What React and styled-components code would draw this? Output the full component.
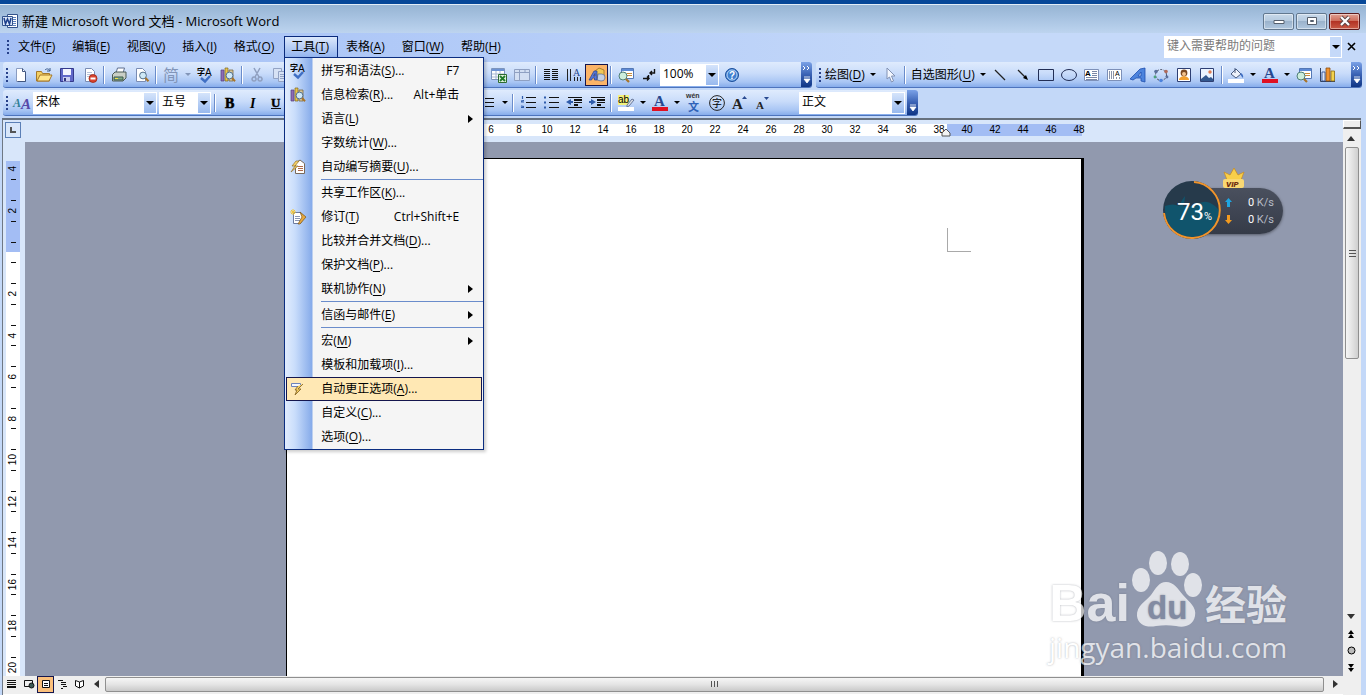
import React from 'react';
import styled, { createGlobalStyle, css } from 'styled-components';

const GlobalStyle = createGlobalStyle`
  * { box-sizing: border-box; }
  body {
    margin: 0;
    font: 12px/16px "Open Sans", "Noto Sans CJK SC", sans-serif;
    color: #000;
    overflow: hidden;
  }
  button, select, input {
    font: inherit;
    color: inherit;
    margin: 0;
    padding: 0;
    border: 0;
    background: none;
    border-radius: 0;
  }
  u { text-underline-offset: 2px; }
  svg { overflow: visible; }
`;

const barFill = 'linear-gradient(#dfebfd 0%, #c9dcfa 45%, #a9c6f4 80%, #86aceb 100%)';
const endFill = 'linear-gradient(#7ba2e7, #3a62b4 50%, #0f3585)';

/* ---------- window ---------- */

const Window = styled.div`
  display: flex;
  flex-direction: column;
  height: 100vh;
  border-top: 4px solid #064798;
  background: #c3d8f8;
  position: relative;
`;

const TitleBar = styled.header`
  display: flex;
  align-items: center;
  height: 29px;
  padding: 4px 6px 0 2px;
  border-top: 1px solid #e2edf7;
  background: linear-gradient(#96b4d3, #a9c4e2 50%, #bdd4ef);
`;

const Title = styled.h1`
  flex: 1;
  margin: 0 0 0 4px;
  font-size: 13px;
  font-weight: 400;
  line-height: 18px;
`;

const WindowButtons = styled.div`
  display: flex;
  gap: 2px;
`;

const WindowButton = styled.button`
  display: flex;
  align-items: center;
  justify-content: center;
  width: 31px;
  height: 17px;
  border: 1px solid ${p => (p.$close ? '#5c1a1c' : '#62788f')};
  border-radius: 2px;
  box-shadow: inset 0 0 0 1px rgba(255, 255, 255, .45);
  background: ${p => (p.$close
    ? 'linear-gradient(#e0a093, #cd6a58 48%, #b33325 50%, #c95a45)'
    : 'linear-gradient(#c8d9ea, #b4c9de 48%, #9bb3cc 50%, #b0c7df)')};
`;

/* ---------- menu bar ---------- */

const MenuBar = styled.nav`
  display: flex;
  align-items: center;
  gap: 1px;
  height: 29px;
  padding: 0 5px 2px 7px;
  background: linear-gradient(90deg, #a4bff5, #b5cdf8 40%, #c5d9f9 70%);
`;

const MenuEntry = styled.div`
  position: relative;
`;

const MenuButton = styled.button`
  height: 22px;
  padding: 0 8px 0 6px;
  border: 1px solid transparent;
  white-space: nowrap;
  ${p => p.$open && css`
    border-color: #0a2a7c;
    border-bottom: 0;
    background: linear-gradient(#dce8fb, #90b2ee);
  `}
`;

const HelpBox = styled.div`
  display: flex;
  margin-left: auto;
  width: 178px;
  height: 22px;
  background: #fff;
`;

const HelpInput = styled.input`
  flex: 1;
  min-width: 0;
  padding: 0 3px 2px;
  &::placeholder { color: #7b7b7b; opacity: 1; }
`;

const CaretButton = styled.button`
  display: flex;
  align-items: center;
  justify-content: center;
  width: 13px;
  border: 1px solid #fff;
  background: #c5d9f9;
`;

const CloseDoc = styled.button`
  display: flex;
  padding: 4px 5px 4px 4px;
`;

const Dropdown = styled.div`
  position: absolute;
  z-index: 5;
  top: 21px;
  left: 0;
  width: 200px;
  padding: 1px 0 0;
  border: 1px solid #0b2d80;
  background: linear-gradient(90deg, #dfebfd 1px, #c9ddfb 10px, #86abea 27px, #f5f5f5 28px);
  box-shadow: 2px 2px 3px rgba(0, 0, 0, .2);
`;

const DropItem = styled.button`
  display: flex;
  align-items: center;
  width: 196px;
  height: 24px;
  margin: 0 1px;
  padding: 0 6px 0 3px;
  border: 1px solid transparent;
  text-align: left;
  ${p => p.$active && css`
    border-color: #14164e;
    background: #ffe8b4;
  `}
`;

const DropIcon = styled.span`
  display: flex;
  width: 31px;
`;

const Shortcut = styled.span`
  margin-left: auto;
  padding-right: 16px;
`;

const SubArrow = styled.span`
  margin-left: auto;
  margin-right: 2px;
  border: 4px solid transparent;
  border-left: 5px solid #000;
  border-right: 0;
`;

const DropLine = styled.div`
  height: 2px;
  margin-left: 36px;
  border-top: 1px solid #6a8ccb;
`;

/* ---------- toolbars ---------- */

const ToolRow = styled.div`
  display: flex;
  height: ${p => p.$h}px;
  padding: 0 4px 2px 3px;
  gap: 4px;
`;

const Toolbar = styled.div`
  display: flex;
  align-items: center;
  padding-left: 3px;
  border-radius: 3px;
  border-bottom: 1px solid #4d74bd;
  background: ${barFill};
  flex: ${p => (p.$grow ? '1' : 'none')};
  width: ${p => (p.$w ? p.$w + 'px' : 'auto')};
  min-width: 0;
`;

const Grip = styled.span`
  flex: none;
  width: 2px;
  height: 14px;
  margin-right: ${p => p.$after || 1}px;
  background: repeating-linear-gradient(#27418a 0 2px, transparent 2px 4px);
`;

const ToolButton = styled.button`
  flex: none;
  display: flex;
  align-items: center;
  justify-content: center;
  width: 23px;
  height: 22px;
  ${p => p.$on && css`
    border: 1px solid #14164e;
    background: #fbb467;
  `}
`;

const TextTool = styled.button`
  flex: none;
  padding: 0 3px;
  white-space: nowrap;
`;

const Split = styled.span`
  flex: none;
  width: 2px;
  height: 18px;
  margin: 0 2px;
  border-left: 1px solid #6a8ccb;
  border-right: 1px solid #fff;
`;

const Drop = styled.button`
  flex: none;
  display: flex;
  justify-content: center;
  width: 11px;
`;

const Triangle = styled.span`
  border: ${p => p.$size || 3}px solid transparent;
  border-top-color: ${p => p.$color || '#000'};
  border-bottom: 0;
`;

const Covered = styled.span`
  flex: none;
  width: ${p => p.$w}px;
`;

const Picker = styled.label`
  flex: none;
  position: relative;
  display: block;
  width: ${p => p.$w}px;
  height: 22px;
  margin-right: ${p => p.$after || 0}px;
  select {
    appearance: none;
    width: 100%;
    height: 100%;
    padding: 0 16px 2px 3px;
    background: #fff;
  }
`;

const PickerCaret = styled.span`
  position: absolute;
  top: 1px;
  right: 1px;
  bottom: 1px;
  display: flex;
  align-items: center;
  justify-content: center;
  width: 12px;
  background: linear-gradient(#d5e4fb, #98b9ee);
  pointer-events: none;
`;

const ToolEnd = styled.button`
  align-self: stretch;
  flex: none;
  display: flex;
  flex-direction: column;
  align-items: center;
  justify-content: space-between;
  width: 11px;
  margin-left: auto;
  padding: 3px 0;
  border-radius: 0 3px 3px 0;
  background: ${endFill};
`;

/* ---------- document area ---------- */

const Body = styled.div`
  flex: 1;
  display: grid;
  grid-template-columns: 22px 1fr 18px;
  grid-template-rows: 22px 1fr 19px;
  min-height: 0;
  margin: 0 5px 0 2px;
  border-top: 2px solid #66717f;
  border-left: 1px solid #6f7884;
  background: #d8e6fa;
`;

const TabCorner = styled.button`
  display: flex;
  align-items: center;
  justify-content: center;
  width: 16px;
  height: 16px;
  margin: 2px 0 0 2px;
  border: 1px solid #5b7fb6;
`;

const HRuler = styled.div`
  display: flex;
  justify-content: center;
  min-width: 0;
  padding: 4px 0 0;
`;

const HBand = styled.div`
  position: relative;
  display: flex;
  flex: none;
  width: 796px;
  height: 12px;
  padding-left: 135px;
  background: linear-gradient(90deg, #a3bdf4 121px, #fff 121px 661px, #a3bdf4 661px);
`;

const HMark = styled.span`
  flex: none;
  display: flex;
  flex-direction: column;
  align-items: center;
  width: 28px;
  font: 10px/12px "Liberation Sans", sans-serif;
  &::after {
    content: '';
    width: 1px;
    height: 3px;
    margin-top: 1px;
    background: ${p => (p.$tick ? '#6d7f9e' : 'transparent')};
  }
`;

const Indent = styled.svg`
  position: absolute;
  left: 655px;
  top: 4px;
`;

const VRuler = styled.div`
  width: 14px;
  margin: 19px 0 0 3px;
  min-height: 0;
  overflow: hidden;
  background: linear-gradient(#a3bdf4 91px, #fff 91px);
`;

const VMark = styled.div`
  display: flex;
  flex-direction: column;
  align-items: center;
  justify-content: space-between;
  height: ${p => (p.$short ? 41 : 42)}px;
  padding: 10px 0;
  font: 10px/12px "Liberation Sans", sans-serif;
  &:first-child { height: 29px; padding-top: 5px; }
  &::before, &::after {
    content: '';
    width: 5px;
    height: 1px;
    background: #111;
  }
  &:first-child::before { display: none; }
  span {
    writing-mode: vertical-rl;
    transform: rotate(180deg);
  }
`;

const Desk = styled.main`
  display: flex;
  justify-content: center;
  min-width: 0;
  min-height: 0;
  padding: 16px 0 0 2px;
  background: #9199ae;
`;

const Page = styled.article`
  width: 798px;
  flex: none;
  border: 1px solid #000;
  border-right-width: 3px;
  border-bottom: 0;
  background: #fff;
`;

const Crop = styled.div`
  width: 24px;
  height: 24px;
  margin: 69px 0 0 660px;
  border-left: 1px solid #a9a9a9;
  border-bottom: 1px solid #a9a9a9;
`;

const VScroll = styled.div`
  grid-row: 1 / 4;
  grid-column: 3;
  display: flex;
  flex-direction: column;
  background: #efefef;
`;

const SplitBox = styled.div`
  height: 9px;
  border: 1px solid #fff;
  border-right-color: #555;
  border-bottom: 2px solid #555;
  background: #eee;
`;

const ScrollButton = styled.button`
  flex: none;
  display: flex;
  align-items: center;
  justify-content: center;
  width: 16px;
  height: ${p => p.$h || 17}px;
`;

const VThumb = styled.div`
  display: flex;
  align-items: center;
  justify-content: center;
  height: 212px;
  margin: 0 2px;
  border: 1px solid #8f8f8f;
  border-radius: 2px;
  background: linear-gradient(90deg, #f6f6f6, #e4e4e4 50%, #cfcfcf);
`;

const Room = styled.div`
  flex: 1;
`;

const HScroll = styled.div`
  grid-column: 1 / 3;
  grid-row: 3;
  display: flex;
  align-items: center;
  padding-bottom: 2px;
  border-bottom: 1px solid #fff;
  background: #efefef;
`;

const ViewButton = styled.button`
  display: flex;
  align-items: center;
  justify-content: center;
  width: 17px;
  height: 17px;
  ${p => p.$on && css`
    border: 1px solid #14164e;
    background: #fbc07c;
  `}
`;

const HThumb = styled.div`
  flex: 1;
  display: flex;
  align-items: center;
  justify-content: center;
  height: 15px;
  margin: 0 3px 0 1px;
  border: 1px solid #8f8f8f;
  border-radius: 2px;
  background: linear-gradient(#f6f6f6, #e4e4e4 50%, #c9c9c9);
`;

/* ---------- floating speed meter ---------- */

const Meter = styled.aside`
  position: absolute;
  z-index: 3;
  right: 83px;
  top: 163px;
  width: 121px;
  height: 74px;
  font-family: Roboto, sans-serif;
`;

const MeterPill = styled.div`
  position: absolute;
  right: 0;
  top: 21px;
  width: 96px;
  height: 46px;
  padding: 6px 9px 0 38px;
  border-radius: 0 23px 23px 0;
  background: linear-gradient(#4a505e, #353b48);
  box-shadow: 0 1px 3px rgba(0, 0, 0, .4);
`;

const Speed = styled.div`
  display: flex;
  align-items: center;
  justify-content: space-between;
  height: 17px;
  color: #b9bec8;
  font-size: 11px;
  b { color: #fff; font-weight: 400; }
`;

const MeterDial = styled.svg`
  position: absolute;
  left: 0;
  top: 13px;
`;

const MeterValue = styled.div`
  position: absolute;
  left: 15px;
  top: 31px;
  color: #fff;
  font-size: 24px;
  line-height: 28px;
  font-weight: 400;
  small { font-size: 11px; }
`;

const Crown = styled.svg`
  position: absolute;
  left: 60px;
  top: 0;
`;

/* ---------- watermark ---------- */

const Mark = styled.div`
  position: absolute;
  z-index: 2;
  right: 74px;
  bottom: 30px;
  width: 246px;
  padding-left: 3px;
  color: #fff;
  opacity: .72;
  font-family: "Open Sans", sans-serif;
  text-shadow: 0 0 2px rgba(90, 95, 110, .7);
`;

const MarkTop = styled.div`
  display: flex;
  align-items: flex-end;
  height: 80px;
`;

const MarkBai = styled.span`
  width: 81px;
  font: 700 52px/60px "Liberation Sans", sans-serif;
  height: 56px;
`;

const MarkPaw = styled.svg`
  flex: none;
  margin: 0 6px 0 1px;
`;

const MarkCn = styled.span`
  font: 700 41px/60px "Noto Sans CJK SC", sans-serif;
  height: 57px;
  white-space: nowrap;
`;

const MarkUrl = styled.div`
  font-size: 28px;
  line-height: 36px;
`;

/* ---------- icons ---------- */

const lines = (x, w, ys, c = '#111') => ys.map(y => (
  <rect key={y} x={x} y={y} width={w} height="1" fill={c} />
));

const glass = (x, y) => (
  <>
    <circle cx={x} cy={y} r="3.4" fill="#cfe9f7" stroke="#55708c" />
    <path d={`M${x + 2.5} ${y + 2.5}l3 3.2`} stroke="#a8742a" strokeWidth="2" />
  </>
);

const spell = (
  <>
    <text x="0" y="8" fontSize="8" fontWeight="700" fontFamily="Noto Sans CJK SC">字</text>
    <text x="8" y="9" fontSize="10" fontFamily="Liberation Sans">A</text>
    <path d="M4 11l4 3.500 5-5.500" fill="none" stroke="#3f6fc4" strokeWidth="2.4" />
  </>
);

const research = (
  <>
    <path d="M1 3h3v11H1z" fill="#8d6bb5" stroke="#53407c" strokeWidth=".7" />
    <path d="M5 1h3v13H5z" fill="#e8c54d" stroke="#7d6420" strokeWidth=".7" />
    <path d="M9 3h4v11H9z" fill="#d8c79c" stroke="#6f5c32" strokeWidth=".7" />
    {glass(9.5, 8.5)}
  </>
);

const mapIcon = (
  <>
    <path d="M3.500 1.500h12v10h-12z" fill="#fff" stroke="#5478b5" />
    <path d="M4 2h11v2H4z" fill="#5d8ad6" />
    {lines(9, 5, [6, 8], '#c98d3c')}
    <circle cx="5" cy="9" r="4" fill="#cdeedd" stroke="#4f7f78" />
    <path d="M8 12l3 3" stroke="#a8742a" strokeWidth="2.2" />
  </>
);

const docShape = <path d="M3.500 1.500h6l3 3v10h-9z" fill="#fff" stroke="#7a8cb3" />;

const fontColor = (
  <>
    <text x="2" y="11" fontSize="15" fontWeight="700" fill="#27488f" fontFamily="Liberation Serif">A</text>
    <path d="M0 12h16v4H0z" fill="#e01022" />
  </>
);

const art = {
  word: (
    <>
      <path d="M5.500 1.500h10v13h-10z" fill="#fff" stroke="#33538c" />
      {lines(11, 3, [4, 6, 8, 10, 12], '#5b80bd')}
      <path d="M.5 3.500h10v9H.5z" fill="#dce8fa" stroke="#33538c" />
      <path d="M2 5l1.500 6L5.500 6l2 5L9 5" fill="none" stroke="#1c3f8b" strokeWidth="1.500" />
    </>
  ),
  newDoc: <><path d="M3.500 1.500h6l3 3v10h-9z" fill="#fff" stroke="#8a9cc0" /><path d="M9.500 1.500v3h3M12.500 5v9.500h-8" fill="none" stroke="#40557f" /></>,
  open: (
    <>
      <path d="M.5 14V4.500h5l1 2h7V14z" fill="#f3cf62" stroke="#a5782a" />
      <path d="M1 14l3-6h12l-3 6z" fill="#ffe58c" stroke="#a5782a" />
      <path d="M9 3c2-2 4-1 5 1m0-3v3h-3" fill="none" stroke="#3a5a8c" />
    </>
  ),
  save: (
    <>
      <path d="M1.500 1.500h13v13h-13z" fill="#6068c8" stroke="#353a8c" />
      <path d="M4 2h8v6H4z" fill="#f2f4ff" />
      <path d="M4 10h7v4.500H4z" fill="#c9cdf0" /><path d="M5 11h2v3H5z" fill="#30357e" />
    </>
  ),
  permission: (
    <>
      {docShape}
      {lines(5, 5, [5, 7, 9], '#b8c3da')}
      <circle cx="11" cy="11.500" r="4" fill="#d9432f" stroke="#9c2413" strokeWidth=".8" />
      <path d="M8.500 10.500h5v2h-5z" fill="#fff" />
    </>
  ),
  print: (
    <>
      <path d="M5 6l1.500-5h7L12 6z" fill="#fff" stroke="#5f6f8f" />
      <path d="M1.500 7.500L4 5h11v6l-3 3H1.500z" fill="#c9cfc6" stroke="#4b5a55" />
      <path d="M3 10h9v3H3z" fill="#7fa98a" stroke="#3c5a4a" /><path d="M4 11h3v1H4z" fill="#f4e04b" />
    </>
  ),
  preview: <><path d="M2.500 1.500h6l3 3v10h-9z" fill="#fff" stroke="#7a8cb3" />{glass(9, 8.5)}</>,
  simplify: <text x="0" y="14" fontSize="16" fill="#8295b8" fontFamily="Noto Sans CJK SC">简</text>,
  spell,
  research,
  cut: <path d="M5 1l5 9M11 1L6 10M5 10a2 2 0 1 0 .1 0M11 10a2 2 0 1 0 .1 0" fill="none" stroke="#8f9fbf" strokeWidth="1.500" />,
  copy: <><path d="M1.500 1.500h8v10h-8z" fill="#d7e2f5" stroke="#93a3c4" /><path d="M6.500 4.500h8v10h-8z" fill="#d7e2f5" stroke="#93a3c4" />{lines(8, 5, [7, 9, 11], '#93a3c4')}</>,
  excel: (
    <>
      <path d="M.5 1.500h13v11H.5z" fill="#fff" stroke="#7d95bd" />
      <path d="M1 2h12v2H1z" fill="#6d93d4" /><path d="M1 7h12M1 10h12M5 4v8M9 4v8" stroke="#a7b7d2" />
      <path d="M7.500 7.500h8v8h-8z" fill="#e2f2df" stroke="#2d6b31" /><path d="M9 9l5 5M14 9l-5 5" stroke="#1f7a2a" strokeWidth="1.800" />
    </>
  ),
  tables: <><path d="M.5 2.500h15v11H.5z" fill="#d3dff3" stroke="#8fa0c2" /><path d="M.5 5.500h15M5.500 2.500v11M11 2.500v3" stroke="#8fa0c2" /></>,
  columns: <>{lines(1, 6, [2, 4, 6, 8, 10, 12])}{lines(9, 6, [2, 4, 6, 8, 10, 12])}</>,
  textDir: <><path d="M1.500 2v12M4.500 2v12M8.500 10v4M11.500 10v4M14.500 10v4" stroke="#222" /><text x="7" y="9" fontSize="10" fill="#27488f" fontFamily="Liberation Serif">A</text></>,
  drawing: (
    <>
      <path d="M6 4l4-3 5 2v6l-4 3-5-2z" fill="#f0c858" stroke="#8a6420" strokeWidth=".7" />
      <path d="M9 7h4a3.500 3.500 0 0 1-1 7l-4-1z" fill="#c3cfe4" stroke="#51648c" strokeWidth=".7" />
      <path d="M0 13L5 4h3v9H5.500v-2H3.500l-1 2zM4.500 9h1.500V6.500z" fill="#5878d6" stroke="#27408c" strokeWidth=".7" />
    </>
  ),
  mapIcon,
  marks: <path d="M13.500 2v4H9m2-2L9 6l2 2M2 11.500h6M6 9.500l2 2-2 2M7.500 8v3" fill="none" stroke="#111" strokeWidth="1.400" />,
  help: (
    <>
      <circle cx="8" cy="8" r="6.500" fill="#3f7fd0" stroke="#1c4f9c" />
      <circle cx="8" cy="8" r="5" fill="none" stroke="#bcd8f6" />
      <text x="5" y="11.500" fontSize="10" fontWeight="700" fill="#fff" fontFamily="Liberation Sans">?</text>
    </>
  ),
  styles: (
    <>
      <text x="-1" y="12" fontSize="12" fontWeight="700" fontStyle="italic" fill="#2f7f96" fontFamily="Liberation Serif">A</text>
      <text x="7" y="14" fontSize="15" fontWeight="700" fontStyle="italic" fill="#5648a8" fontFamily="Liberation Serif">A</text>
    </>
  ),
  bold: <text x="3" y="13" fontSize="14" fontWeight="700" stroke="#000" strokeWidth=".6" fontFamily="Liberation Serif">B</text>,
  italic: <text x="5" y="13" fontSize="14" fontWeight="700" fontStyle="italic" fontFamily="Liberation Serif">I</text>,
  underline: <><text x="3" y="12" fontSize="13" fontWeight="700" stroke="#000" strokeWidth=".4" fontFamily="Liberation Serif">U</text>{lines(3, 10, [13])}</>,
  spacing: <>{lines(5, 9, [3, 7, 11])}<path d="M2 3v9" stroke="#27488f" /></>,
  numbers: <>{lines(6, 10, [2, 7, 12])}<path d="M2.500 1v3M1 7h3M1 12.500h3M1 6l3-.5M1 11l3 .5" stroke="#2f5cab" strokeWidth="1.200" /></>,
  bullets: <>{lines(6, 10, [2, 7, 12])}<path d="M1 1.500h2v2H1zM1 6.500h2v2H1zM1 11.500h2v2H1z" fill="#2f5cab" /></>,
  outdent: <>{lines(2, 14, [2, 12])}{lines(8, 8, [4, 5, 7])}{lines(8, 4, [9, 10])}<path d="M5 4v2h2v2H5v2L0 7z" fill="#2f5cab" /></>,
  indent: <>{lines(2, 14, [2, 12])}{lines(8, 8, [4, 5, 7])}{lines(8, 4, [9, 10])}<path d="M2 4v2H0v2h2v2l5-3z" fill="#2f5cab" /></>,
  highlight: (
    <>
      <path d="M0 0h11v10H0z" fill="#f4f27c" />
      <text x="0" y="8" fontSize="10" fontFamily="Liberation Sans">ab</text>
      <path d="M9 10l5-6 2 1-5 6-2 1z" fill="#d9dde6" stroke="#4c5f85" strokeWidth=".8" />
      <path d="M0 12h16v4H0z" fill="#fff" />
    </>
  ),
  fontColor,
  phonetic: (
    <>
      <text x="0" y="3" fontSize="7" fontWeight="700" fill="#333" fontFamily="Liberation Sans">wén</text>
      <text x="2" y="16" fontSize="11" fontWeight="700" fill="#2f62b8" fontFamily="Noto Sans CJK SC">文</text>
    </>
  ),
  circled: <><circle cx="8" cy="8" r="7.400" fill="none" stroke="#222" /><text x="3" y="12" fontSize="10" fontFamily="Noto Sans CJK SC">字</text></>,
  grow: <><text x="0" y="14" fontSize="15" fontWeight="700" fill="#222" fontFamily="Liberation Serif">A</text><path d="M10 4l2.500-3L15 4z" fill="#27488f" /></>,
  shrink: <><text x="1" y="14" fontSize="11" fontWeight="700" fill="#222" fontFamily="Liberation Serif">A</text><path d="M9 2l2.500 3L14 2z" fill="#27488f" /></>,
  pointer: <path d="M5 1l8 8H9.500l2 5-2 1-2-5L5 12z" fill="#f3f7ff" stroke="#8292b4" />,
  line: <path d="M3 3l10 10" stroke="#222" strokeWidth="1.200" />,
  arrow: <><path d="M3 3l8 8" stroke="#222" strokeWidth="1.200" /><path d="M13 13l-5-2 3-3z" /></>,
  rect: <path d="M.5 2.500h15v11H.5z" fill="none" stroke="#222e55" />,
  oval: <ellipse cx="8" cy="8" rx="7.500" ry="5.500" fill="none" stroke="#222e55" />,
  textBox: <><path d="M.5 2.500h14v11H.5z" fill="#fff" stroke="#7d90b8" /><text x="1" y="9" fontSize="8" fontWeight="700" fontFamily="Liberation Sans">A</text>{lines(8, 5, [4, 6, 8], '#7a88a6')}{lines(2, 11, [10, 12], '#7a88a6')}</>,
  vTextBox: <><path d="M.5 2.500h14v11H.5z" fill="#fff" stroke="#7d90b8" /><path d="M2.500 4v8M4.500 4v8M6.500 4v8M9.500 10v2M12.500 10v2" stroke="#8a94aa" /><text x="8" y="9" fontSize="7" fontFamily="Liberation Sans">A</text></>,
  wordArt: <path d="M0 12L10 2l5-1v14l-4-1v-3H6l-3 2zM8 9h3V5z" fill="#4c83dd" stroke="#1f4fae" strokeWidth=".8" />,
  diagram: (
    <>
      <circle cx="8" cy="8" r="5.500" fill="none" stroke="#445" strokeDasharray="2 1.500" />
      <circle cx="3" cy="4.500" r="1.800" fill="#5a6f9c" /><circle cx="13" cy="4.500" r="1.800" fill="#b06a5a" />
      <circle cx="8" cy="13.500" r="1.800" fill="#4c83dd" /><circle cx="2" cy="10" r="1.400" fill="#4ca37c" />
      <circle cx="14" cy="10" r="1.400" fill="#5a6f9c" />
    </>
  ),
  clip: (
    <>
      <path d="M1.500 1.500h13v13h-13z" fill="#fff" stroke="#2e3f73" />
      <circle cx="8" cy="6" r="3.400" fill="#7b4a22" /><circle cx="8" cy="7" r="2" fill="#f4c48e" />
      <path d="M3 13c0-5 10-5 10 0z" fill="#f2a02e" />
    </>
  ),
  picture: (
    <>
      <path d="M1.500 1.500h13v13h-13z" fill="#eaf3ff" stroke="#2e3f73" />
      <path d="M2 14V12l5-4 3 3 2-1 2 2v2z" fill="#33588f" /><circle cx="11" cy="5" r="1.700" fill="#e07a4e" />
    </>
  ),
  fill: (
    <>
      <path d="M3 7l5-5 5 5-5 4z" fill="#eef2fa" stroke="#4a5c80" /><path d="M7 6V1" stroke="#4a5c80" />
      <path d="M13 6c2 1 2.500 3 2 5-1.500-1-2-3-3-4z" fill="#3f6fc4" /><path d="M0 12h16v4H0z" fill="#fff" />
    </>
  ),
  chart: (
    <>
      <path d="M1.500 1v13.500H16" fill="none" stroke="#33415f" />
      <path d="M3 5h3v9H3z" fill="#dfe8f8" stroke="#27488f" strokeWidth=".8" />
      <path d="M7 1h4v13H7z" fill="#f0922e" stroke="#8a4f12" strokeWidth=".8" />
      <path d="M12 4h3.500v10H12z" fill="#f3d34f" stroke="#8a6a12" strokeWidth=".8" />
    </>
  ),
  summary: (
    <>
      <path d="M5.500 4.500L10 1l4.500 3.500v10h-9z" fill="#fff" stroke="#7a6a5a" />
      {lines(8, 5, [7, 9, 11], '#b06a4a')}
      <path d="M6 2L2 7h3l-4 6 7-6H5l4-5z" fill="#f6d36a" stroke="#93702a" strokeWidth=".7" />
    </>
  ),
  track: (
    <>
      <path d="M3.500 3.500h7l4 4-4 7h-7z" fill="#fff" stroke="#6c7ba0" />
      {lines(5, 5, [7, 9, 11], '#8a97b5')}
      <path d="M10 3l6 5-6 7-2 0 4-7z" fill="#e8a93e" stroke="#7b5519" strokeWidth=".7" />
      <path d="M3 0v6M0 3h6M1 1l4 4M5 1L1 5" stroke="#f0c53a" />
    </>
  ),
  autocorrect: (
    <>
      <path d="M1.500 2.500h9v3h-9z" fill="#f4f8ff" stroke="#6d83bb" />
      <path d="M13 3L8 8h3l-6 6 2-5H5l3-4" fill="#f5cf62" stroke="#8a6a2a" strokeWidth=".9" />
    </>
  ),
  normalView: <>{lines(3, 9, [4, 6, 8, 10, 11])}</>,
  webView: <><path d="M3.500 4.500h8v6h-8z" fill="none" stroke="#111" /><circle cx="10.500" cy="9.500" r="2.500" fill="#3d5b57" stroke="#111" /></>,
  pageView: <><path d="M4.500 4.500h7v7h-7z" fill="#fff" stroke="#111" />{lines(6, 4, [7, 9])}</>,
  outlineView: <>{lines(3, 5, [4])}{lines(6, 5, [6, 8])}{lines(8, 4, [10])}{lines(6, 2, [12])}</>,
  readView: <path d="M3.500 4.500l4 1.500v6l-4-2zM11.500 4.500L7.500 6v6l4-2z" fill="#fff" stroke="#111" />,
};

const Icon = ({ name, size = 16 }) => (
  <svg width={size} height={size} viewBox="0 0 16 16" aria-hidden="true">{art[name]}</svg>
);

const Tool = ({ name, on }) => (
  <ToolButton $on={on} aria-label={name}><Icon name={name} /></ToolButton>
);

const Caret = ({ color }) => (
  <Drop aria-label="more"><Triangle $color={color} /></Drop>
);

const Key = ({ text, k, tail }) => <>{text}(<u>{k}</u>){tail}</>;

const Select = ({ label, value, w, after }) => (
  <Picker $w={w} $after={after}>
    <select aria-label={label} defaultValue={value}>
      <option>{value}</option>
    </select>
    <PickerCaret><Triangle $size={4} /></PickerCaret>
  </Picker>
);

const End = ({ more }) => (
  <ToolEnd aria-label="toolbar options">
    <svg width="9" height="6">{more && <path d="M1 1l2 2-2 2M5 1l2 2-2 2" fill="none" stroke="#fff" />}</svg>
    <svg width="8" height="8"><path d="M1 1h6M1 3h6L4 7z" fill="#fff" stroke="#fff" strokeWidth=".8" /></svg>
  </ToolEnd>
);

const toolsMenu = [
  { text: '拼写和语法', k: 'S', tail: '...', keys: 'F7', icon: 'spell' },
  { text: '信息检索', k: 'R', tail: '...', keys: 'Alt+单击', icon: 'research' },
  { text: '语言', k: 'L', sub: true },
  { text: '字数统计', k: 'W', tail: '...' },
  { text: '自动编写摘要', k: 'U', tail: '...', icon: 'summary' },
  null,
  { text: '共享工作区', k: 'K', tail: '...' },
  { text: '修订', k: 'T', keys: 'Ctrl+Shift+E', icon: 'track' },
  { text: '比较并合并文档', k: 'D', tail: '...' },
  { text: '保护文档', k: 'P', tail: '...' },
  { text: '联机协作', k: 'N', sub: true },
  null,
  { text: '信函与邮件', k: 'E', sub: true },
  null,
  { text: '宏', k: 'M', sub: true },
  { text: '模板和加载项', k: 'I', tail: '...' },
  { text: '自动更正选项', k: 'A', tail: '...', icon: 'autocorrect', active: true },
  { text: '自定义', k: 'C', tail: '...' },
  { text: '选项', k: 'O', tail: '...' },
];

const menus = [
  ['文件', 'F'], ['编辑', 'E'], ['视图', 'V'], ['插入', 'I'], ['格式', 'O'],
  ['工具', 'T'], ['表格', 'A'], ['窗口', 'W'], ['帮助', 'H'],
];

const ToolsDropdown = () => (
  <Dropdown role="menu">
    {toolsMenu.map((item, i) => (item ? (
      <DropItem key={item.text} role="menuitem" $active={item.active}>
        <DropIcon>{item.icon && <Icon name={item.icon} />}</DropIcon>
        <span><Key {...item} /></span>
        {item.keys && <Shortcut>{item.keys}</Shortcut>}
        {item.sub && <SubArrow />}
      </DropItem>
    ) : <DropLine key={i} role="separator" />))}
  </Dropdown>
);

const StandardBar = () => (
  <Toolbar $w={809}>
    <Grip />
    <Tool name="newDoc" /><Tool name="open" /><Tool name="save" /><Tool name="permission" />
    <Split />
    <Tool name="print" /><Tool name="preview" />
    <Split />
    <Tool name="simplify" /><Caret color="#8295b8" /><Tool name="spell" /><Tool name="research" />
    <Split />
    <Tool name="cut" /><Tool name="copy" />
    <Covered $w={196} />
    <Tool name="excel" /><Tool name="tables" />
    <Split />
    <Tool name="columns" /><Tool name="textDir" /><Tool name="drawing" on />
    <Split />
    <Tool name="mapIcon" /><Tool name="marks" />
    <Select label="zoom" value="100%" w={59} after={1} />
    <Tool name="help" />
    <End more />
  </Toolbar>
);

const DrawingBar = () => (
  <Toolbar $grow>
    <Grip />
    <TextTool><Key text="绘图" k="D" /></TextTool><Caret />
    <Tool name="pointer" />
    <Split />
    <TextTool><Key text="自选图形" k="U" /></TextTool><Caret />
    <Tool name="line" /><Tool name="arrow" /><Tool name="rect" /><Tool name="oval" />
    <Tool name="textBox" /><Tool name="vTextBox" /><Tool name="wordArt" /><Tool name="diagram" />
    <Tool name="clip" /><Tool name="picture" />
    <Split />
    <Tool name="fill" /><Caret /><Tool name="fontColor" /><Caret />
    <Tool name="mapIcon" /><Tool name="chart" />
    <End more />
  </Toolbar>
);

const FormatBar = () => (
  <Toolbar $w={915}>
    <Grip $after={2} />
    <Tool name="styles" />
    <Select label="font" value="宋体" w={124} after={2} />
    <Select label="size" value="五号" w={52} after={1} />
    <Split />
    <Tool name="bold" /><Tool name="italic" /><Tool name="underline" />
    <Covered $w={189} />
    <Tool name="spacing" /><Caret />
    <Split />
    <Tool name="numbers" /><Tool name="bullets" /><Tool name="outdent" /><Tool name="indent" />
    <Split />
    <Tool name="highlight" /><Caret /><Tool name="fontColor" /><Caret />
    <Tool name="phonetic" /><Tool name="circled" /><Tool name="grow" /><Tool name="shrink" />
    <Covered $w={25} />
    <Select label="style" value="正文" w={106} />
    <End />
  </Toolbar>
);

const SpeedMeter = () => (
  <Meter>
    <MeterPill>
      <Speed>
        <svg width="7" height="9"><path d="M3.500 0L7 4H5v5H2V4H0z" fill="#1fa5e0" /></svg>
        <span><b>0</b> K/s</span>
      </Speed>
      <Speed>
        <svg width="7" height="9"><path d="M3.500 9L7 5H5V0H2v5H0z" fill="#f29a1f" /></svg>
        <span><b>0</b> K/s</span>
      </Speed>
    </MeterPill>
    <MeterDial width="60" height="60">
      <circle cx="30" cy="30" r="29" fill="#263a4b" />
      <path d="M3 26q8-3 14 0 4-8 6-10 0 6-2 10 8 2 14-1 8-7 18 1l4 4a27 27 0 0 1-54 0z" fill="#10546c" />
      <path d="M32 2a28 28 0 1 1-30 31" fill="none" stroke="#f0942c" strokeWidth="2" />
    </MeterDial>
    <MeterValue>73<small>%</small></MeterValue>
    <Crown width="24" height="22">
      <path d="M5 13L2 5l6 3 4-7 4 7 6-3-3 8z" fill="#f8cf4a" stroke="#c98a1c" strokeWidth=".7" />
      <rect x="1" y="12" width="21" height="9" rx="2" fill="#f9d873" />
      <text x="4" y="20" fontSize="8" fontWeight="900" fontStyle="italic" fill="#6e2d10" fontFamily="Roboto">VIP</text>
    </Crown>
  </Meter>
);

const Watermark = () => (
  <Mark>
    <MarkTop>
      <MarkBai>Bai</MarkBai>
      <MarkPaw width="68" height="80" viewBox="0 0 68 80">
        <g fill="#fff">
          <ellipse cx="10" cy="31" rx="9" ry="12" />
          <ellipse cx="27" cy="14" rx="9" ry="12" />
          <ellipse cx="49" cy="15" rx="9" ry="12" />
          <ellipse cx="62" cy="36" rx="9" ry="12" />
          <path d="M35 33c8 0 12 7 17 13 6 7 14 12 12 21-2 10-11 12-19 10-7-1-13-1-20 0-9 2-18-1-19-10-1-10 9-15 14-21 5-7 8-13 15-13z" />
        </g>
        <text x="16" y="70" fontSize="33" fontWeight="700" fill="#7d869e" fontFamily="Liberation Sans">du</text>
      </MarkPaw>
      <MarkCn>经验</MarkCn>
    </MarkTop>
    <MarkUrl>jingyan.baidu.com</MarkUrl>
  </Mark>
);

const hMarks = Array.from({ length: 24 }, (_, i) => (i + 1) * 2);
const vMarks = ['4', '2', '', '2', '4', '6', '8', '10', '12', '14', '16', '18', '20'];

const App = () => (
  <>
    <GlobalStyle />
    <Window>
      <TitleBar>
        <Icon name="word" />
        <Title>新建 Microsoft Word 文档 - Microsoft Word</Title>
        <WindowButtons>
          <WindowButton aria-label="minimize">
            <svg width="12" height="8"><path d="M1 3.500h10v3H1z" fill="#fff" stroke="#555f6d" /></svg>
          </WindowButton>
          <WindowButton aria-label="restore">
            <svg width="12" height="10"><path d="M1.500 1.500h9v7h-9z" fill="#fff" stroke="#555f6d" /><path d="M4.500 4.500h3v1h-3z" stroke="#555f6d" fill="none" /></svg>
          </WindowButton>
          <WindowButton $close aria-label="close">
            <svg width="12" height="10"><path d="M2 1l8 8M10 1L2 9" stroke="#5b4545" strokeWidth="4" /><path d="M2 1l8 8M10 1L2 9" stroke="#fff" strokeWidth="2.200" /></svg>
          </WindowButton>
        </WindowButtons>
      </TitleBar>

      <MenuBar>
        <Grip />
        {menus.map(([text, k]) => (
          <MenuEntry key={k}>
            <MenuButton $open={k === 'T'}><Key text={text} k={k} /></MenuButton>
            {k === 'T' && <ToolsDropdown />}
          </MenuEntry>
        ))}
        <HelpBox>
          <HelpInput aria-label="help question" placeholder="键入需要帮助的问题" />
          <CaretButton aria-label="recent questions"><Triangle $size={4} /></CaretButton>
        </HelpBox>
        <CloseDoc aria-label="close document">
          <svg width="9" height="9"><path d="M1 1l7 7M8 1L1 8" stroke="#000" strokeWidth="1.600" /></svg>
        </CloseDoc>
      </MenuBar>

      <ToolRow $h={28}><StandardBar /><DrawingBar /></ToolRow>
      <ToolRow $h={28}><FormatBar /></ToolRow>

      <Body>
        <TabCorner aria-label="tab type">
          <svg width="8" height="8"><path d="M2 1v5h5" fill="none" stroke="#555" strokeWidth="2" /></svg>
        </TabCorner>
        <HRuler>
          <HBand>
            {hMarks.map(n => <HMark key={n} $tick={n < 40}>{n}</HMark>)}
            <Indent width="10" height="9"><path d="M1 8V5l4-4 4 4v3z" fill="#f3f3f3" stroke="#555" /></Indent>
          </HBand>
        </HRuler>
        <VRuler>
          {vMarks.map((n, i) => <VMark key={i} $short={i % 2 === 0}><span>{n}</span></VMark>)}
        </VRuler>
        <Desk>
          <Page><Crop /></Page>
        </Desk>
        <HScroll>
          <ViewButton aria-label="normal view"><Icon name="normalView" /></ViewButton>
          <ViewButton aria-label="web view"><Icon name="webView" /></ViewButton>
          <ViewButton $on aria-label="page view"><Icon name="pageView" /></ViewButton>
          <ViewButton aria-label="outline view"><Icon name="outlineView" /></ViewButton>
          <ViewButton aria-label="reading view"><Icon name="readView" /></ViewButton>
          <ScrollButton aria-label="scroll left"><svg width="5" height="8"><path d="M5 0v8L0 4z" fill="#333" /></svg></ScrollButton>
          <HThumb><svg width="9" height="6"><path d="M1.500 0v6M4.500 0v6M7.500 0v6" stroke="#555" /></svg></HThumb>
          <ScrollButton aria-label="scroll right"><svg width="5" height="8"><path d="M0 0v8l5-4z" fill="#333" /></svg></ScrollButton>
        </HScroll>
        <VScroll>
          <SplitBox />
          <ScrollButton $h={18} aria-label="scroll up"><svg width="8" height="5"><path d="M0 5h8L4 0z" fill="#333" /></svg></ScrollButton>
          <VThumb><svg width="7" height="9"><path d="M0 1.500h7M0 4.500h7M0 7.500h7" stroke="#555" /></svg></VThumb>
          <Room />
          <ScrollButton aria-label="scroll down"><svg width="8" height="5"><path d="M0 0h8L4 5z" fill="#333" /></svg></ScrollButton>
          <ScrollButton aria-label="previous page"><svg width="8" height="8"><path d="M1 4h6L4 0zM1 8h6L4 4z" /></svg></ScrollButton>
          <ScrollButton aria-label="browse object"><svg width="9" height="9"><circle cx="4.500" cy="4.500" r="3.500" fill="#bbb" stroke="#000" /></svg></ScrollButton>
          <ScrollButton aria-label="next page"><svg width="8" height="8"><path d="M1 0h6L4 4zM1 4h6L4 8z" /></svg></ScrollButton>
          <ScrollButton as="span" $h={19} />
        </VScroll>
      </Body>
      <SpeedMeter />
      <Watermark />
    </Window>
  </>
);

export default App;
